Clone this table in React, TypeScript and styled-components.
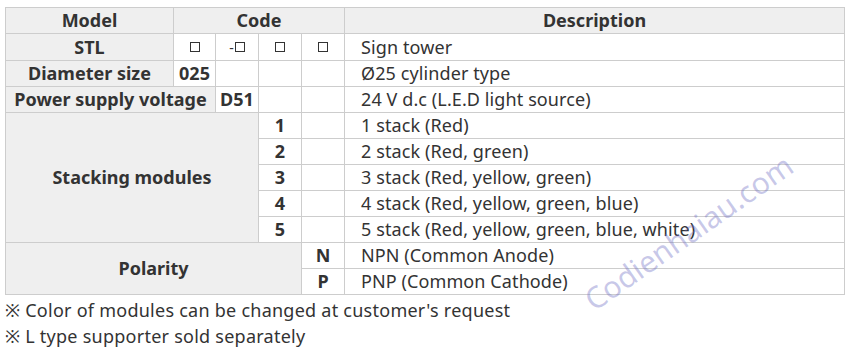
import React from "react";
import styled, { createGlobalStyle } from "styled-components";

const GlobalStyle = createGlobalStyle`
  html, body {
    margin: 0;
    padding: 0;
    background: #ffffff;
  }
  body {
    font-family: "Noto Sans", "Noto Sans CJK KR", sans-serif;
    color: #333333;
  }
`;

const Page = styled.div`
  position: relative;
  width: 850px;
  height: 349px;
  overflow: hidden;
  padding: 7px 0 0 5px;
  box-sizing: border-box;
`;

const Table = styled.table`
  border-collapse: collapse;
  table-layout: fixed;
  width: 840px;
  font-size: 18px;
`;

const Cell = styled.td<{ $head?: boolean; $label?: boolean; $left?: boolean }>`
  height: 25px;
  padding: 0;
  border: 1px solid #cdcdcd;
  background: ${(p) => (p.$head || p.$label ? "#efefef" : "#ffffff")};
  font-weight: ${(p) => (p.$head || p.$label ? 700 : 400)};
  text-align: ${(p) => (p.$left ? "left" : "center")};
  padding-left: ${(p) => (p.$left ? "16px" : "0")};
  letter-spacing: ${(p) => (p.$left ? "0.1px" : "0")};
  line-height: 25px;
  white-space: nowrap;
  color: #333333;
`;

const CodeCell = styled(Cell)`
  font-weight: 700;
`;

const Box = styled.span`
  display: inline-block;
  width: 10px;
  height: 10px;
  border: 1.5px solid #333;
  box-sizing: border-box;
  vertical-align: middle;
  margin-top: -3px;
`;

const Dash = styled.span`
  font-size: 14px;
  margin-right: 1px;
`;

const Notes = styled.div`
  margin-top: 2px;
  font-size: 18px;
  line-height: 26px;
  letter-spacing: 0.25px;
  color: #333333;
`;

const Watermark = styled.div`
  position: absolute;
  left: 588px;
  top: 288px;
  font-size: 30px;
  line-height: 30px;
  font-weight: 400;
  color: rgba(110, 110, 195, 0.38);
  transform: rotate(-35deg);
  transform-origin: left center;
  pointer-events: none;
`;

const stackRows = [
  "1 stack (Red)",
  "2 stack (Red, green)",
  "3 stack (Red, yellow, green)",
  "4 stack (Red, yellow, green, blue)",
  "5 stack (Red, yellow, green, blue, white)",
];

export default function App() {
  return (
    <>
      <GlobalStyle />
      <Page>
        <Table>
          <colgroup>
            <col style={{ width: 168 }} />
            <col style={{ width: 42 }} />
            <col style={{ width: 43 }} />
            <col style={{ width: 43 }} />
            <col style={{ width: 43 }} />
            <col />
          </colgroup>
          <tbody>
            <tr>
              <Cell $head>Model</Cell>
              <Cell $head colSpan={4}>Code</Cell>
              <Cell $head>Description</Cell>
            </tr>
            <tr>
              <Cell $label>STL</Cell>
              <Cell><Box /></Cell>
              <Cell><Dash>-</Dash><Box /></Cell>
              <Cell><Box /></Cell>
              <Cell><Box /></Cell>
              <Cell $left>Sign tower</Cell>
            </tr>
            <tr>
              <Cell $label>Diameter size</Cell>
              <CodeCell>025</CodeCell>
              <Cell />
              <Cell />
              <Cell />
              <Cell $left>Ø25 cylinder type</Cell>
            </tr>
            <tr>
              <Cell $label colSpan={2}>Power supply voltage</Cell>
              <CodeCell>D51</CodeCell>
              <Cell />
              <Cell />
              <Cell $left>24 V d.c (L.E.D light source)</Cell>
            </tr>
            {stackRows.map((text, i) => (
              <tr key={text}>
                {i === 0 && (
                  <Cell $label colSpan={3} rowSpan={5}>Stacking modules</Cell>
                )}
                <CodeCell>{i + 1}</CodeCell>
                <Cell />
                <Cell $left>{text}</Cell>
              </tr>
            ))}
            <tr>
              <Cell $label colSpan={4} rowSpan={2}>Polarity</Cell>
              <CodeCell>N</CodeCell>
              <Cell $left>NPN (Common Anode)</Cell>
            </tr>
            <tr>
              <CodeCell>P</CodeCell>
              <Cell $left>PNP (Common Cathode)</Cell>
            </tr>
          </tbody>
        </Table>
        <Notes>
          <div>※ Color of modules can be changed at customer's request</div>
          <div>※ L type supporter sold separately</div>
        </Notes>
        <Watermark>Codienhaiau.com</Watermark>
      </Page>
    </>
  );
}
